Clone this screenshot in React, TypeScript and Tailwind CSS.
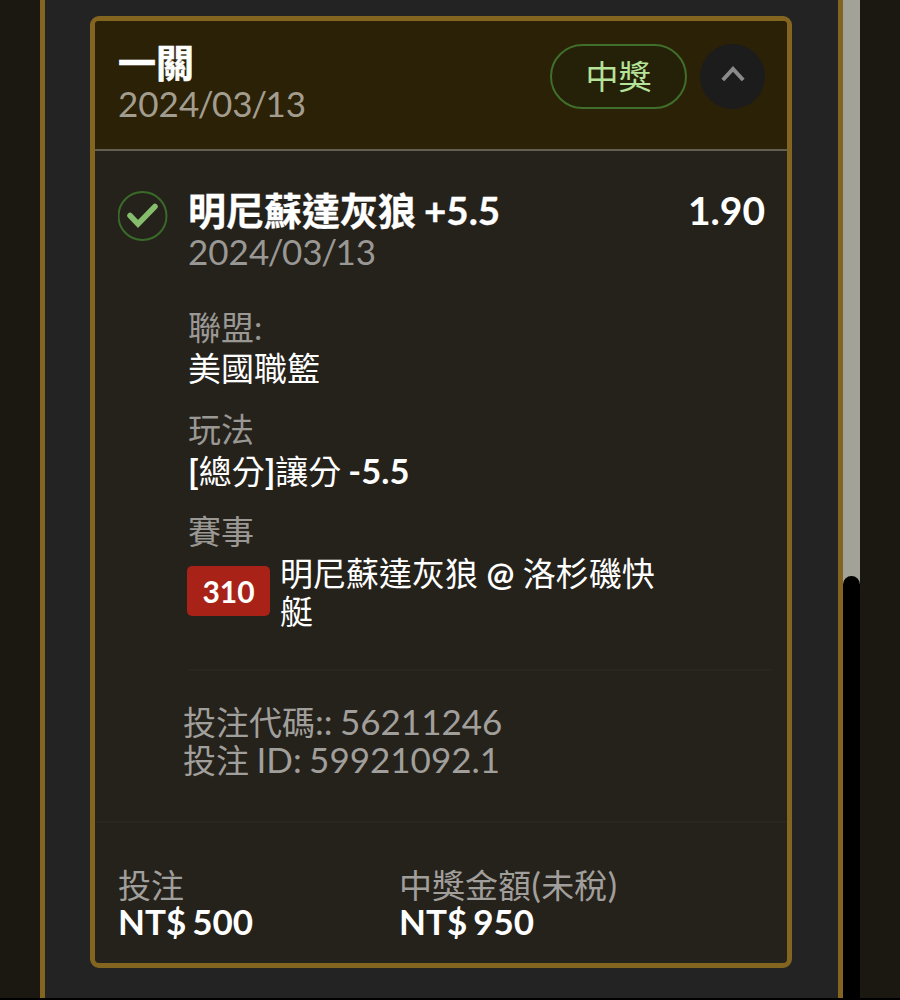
import type { ReactNode } from "react";

interface TextProps {
  children: ReactNode;
}

// CJK glyphs are set slightly smaller than the Latin text next to them
function Cjk(props: TextProps) {
  return <span className="text-[33px] leading-none">{props.children}</span>;
}

function Slash() {
  return <span className="mx-[-1.500px]">/</span>;
}

function BetDate() {
  return (
    <>
      2024<Slash />03<Slash />13
    </>
  );
}

interface FieldProps {
  label: ReactNode;
  children: ReactNode;
}

function Field(props: FieldProps) {
  return (
    <div className="flex flex-col gap-[3px]">
      <div className="text-[33px] text-[#9a9894]">{props.label}</div>
      {props.children}
    </div>
  );
}

function CardHeader() {
  return (
    <div className="flex h-[130px] justify-between border-b-2 border-[#625e52] bg-[#2b2107] pt-[20px] pr-[22px] pl-[23px]">
      <div>
        <h2 className="text-[38px] leading-[42px] font-bold text-white [-webkit-text-stroke:0.6px_white]">一關</h2>
        <p className="mt-px text-[#a39d90]"><BetDate /></p>
      </div>
      <div className="mt-[3px] flex h-[65px] gap-[13px]">
        <span className="flex w-[137px] items-center justify-center rounded-full border-2 border-[#3f6f2a] bg-[#252008] pb-[2px] text-[33px] text-[#b5e39a]">
          中獎
        </span>
        <button className="flex w-[65px] items-center justify-center rounded-full bg-[#1c1c1c]">
          <svg viewBox="0 0 24 16" className="mb-[5px] h-4 w-6" fill="none" stroke="#8c8b8b" strokeWidth="4">
            <path d="M1.8 14 12 3 22.2 14" />
          </svg>
        </button>
      </div>
    </div>
  );
}

function Bet() {
  return (
    <div className="flex h-[518px] pt-[38px] pr-[22px] pl-[22px]">
      <svg viewBox="0 0 50 50" className="mt-[2px] mr-[21px] ml-px h-[50px] w-[50px] shrink-0" fill="none">
        <circle cx="24.500" cy="25" r="24" stroke="#3a6a29" strokeWidth="2" />
        <path
          d="M12 24.500 20 33 37 15.500"
          stroke="#86bd6c"
          strokeWidth="5.500"
          strokeLinecap="round"
        />
      </svg>
      <div className="-ml-px flex-1">
        <div className="flex justify-between text-[38px] leading-[42px] font-bold text-white">
          <h3 className="[-webkit-text-stroke:0.3px_white]">
            明尼蘇達灰狼<span className="ml-[8px] text-[38.500px]">+5.5</span>
          </h3>
          <span className="text-[39px]">1.90</span>
        </div>
        <p className="mt-px text-[#9a9894]"><BetDate /></p>
        <div className="mt-[38px] flex flex-col gap-[23px]">
          <Field label="聯盟:">
            <p className="text-[33px]">美國職籃</p>
          </Field>
          <Field label="玩法">
            <p className="whitespace-nowrap">
              <span className="text-[34px] leading-none font-bold">[</span>
              <Cjk>總分</Cjk>
              <span className="text-[34px] leading-none font-bold">]</span>
              <Cjk>讓分</Cjk>
              <b className="ml-[7px] text-[34.500px] leading-none">-5.5</b>
            </p>
          </Field>
          <Field label="賽事">
            <div className="-ml-px flex items-start gap-[10px]">
              <span className="mt-[13px] flex h-[50px] w-[83px] shrink-0 items-center justify-center rounded-[5px] bg-[#a92217] pb-px text-[30px] font-bold">
                310
              </span>
              <p className="w-[380px] pt-px text-[33px]">
                明尼蘇達灰狼 <span className="font-bold">@</span> 洛杉磯快艇
              </p>
            </div>
          </Field>
        </div>
      </div>
    </div>
  );
}

function BetCodes() {
  return (
    <div className="h-[152px] pl-[88px] text-[#a19f9b]">
      <div className="mr-4 ml-[5px] h-[2px] bg-[#292621]" />
      <div className="pt-[31px] [word-spacing:-1.500px]">
        <p><Cjk>投注代碼</Cjk>:: 56211246</p>
        <p><Cjk>投注</Cjk> ID: 59921092.1</p>
      </div>
    </div>
  );
}

interface TotalProps {
  label: ReactNode;
  amount: string;
}

function Total(props: TotalProps) {
  return (
    <div>
      <p className="h-[37px] text-[#a19f9b]">{props.label}</p>
      <p className="font-bold text-white [word-spacing:-2.500px]">{props.amount}</p>
    </div>
  );
}

function Totals() {
  return (
    <div className="grid flex-1 grid-cols-[281px_1fr] border-t-2 border-[#292621] pt-[42px] pl-[23px]">
      <Total label={<Cjk>投注</Cjk>} amount="NT$ 500" />
      <Total
        label={
          <>
            <Cjk>中獎金額</Cjk><span className="mx-[0.500px]">(</span><Cjk>未稅</Cjk><span className="ml-[0.500px]">)</span>
          </>
        }
        amount="NT$ 950"
      />
    </div>
  );
}

export default function App() {
  return (
    <div className="flex h-[1000px] w-[900px] flex-col bg-black font-['Lato','Noto_Sans_CJK_TC',sans-serif] text-[35px] leading-[38px] text-white">
      <div className="flex h-[998px] bg-[#1b1711] pl-10">
        <div className="w-[803px] border-x-5 border-[#836520] bg-[#232323] pt-4 pl-[45px]">
          <div className="flex h-[952px] w-[702px] flex-col overflow-hidden rounded-[9px] border-5 border-[#836520] bg-[#25221c]">
            <CardHeader />
            <Bet />
            <BetCodes />
            <Totals />
          </div>
        </div>
        <div className="w-[17px] bg-[#a2a298] pt-[576px]">
          <div className="h-[422px] rounded-t-full bg-black" />
        </div>
      </div>
    </div>
  );
}
